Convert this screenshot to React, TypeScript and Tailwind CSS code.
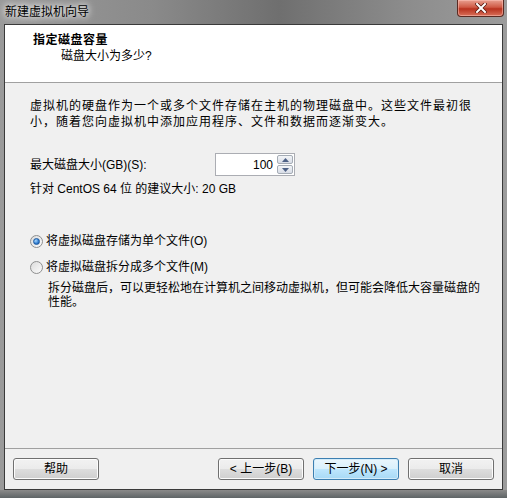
import React from "react";

const FONT = { fontFamily: '"Liberation Sans", "Noto Sans CJK SC", sans-serif' };

function Radio({ checked }: { checked?: boolean }) {
  return (
    <span className="flex h-[13px] w-[13px] shrink-0 items-center justify-center rounded-full border border-[#8e8f8f] bg-[linear-gradient(135deg,#dcdcdc,#fbfbfb)]">
      {checked && (
        <span className="h-[7px] w-[7px] rounded-full border border-[#1d5aa0] bg-[radial-gradient(circle_at_35%_35%,#a8d8ff,#2f7cd0_60%,#1b4f9a)]" />
      )}
    </span>
  );
}

function WinButton({ label, focused }: { label: string; focused?: boolean }) {
  return (
    <button
      className={
        focused
          ? "flex h-[22px] w-[86px] items-center justify-center rounded-[3px] border border-[#3c7fb1] bg-[linear-gradient(#eaf6fd,#d9f0fc_50%,#bee6fd_51%,#a7d9f5)] text-[12px] text-black shadow-[inset_0_0_0_1px_#d3ecfa]"
          : "flex h-[22px] w-[86px] items-center justify-center rounded-[3px] border border-[#707070] bg-[linear-gradient(#f2f2f2,#ebebeb_50%,#dddddd_51%,#cfcfcf)] text-[12px] text-black shadow-[inset_0_0_0_1px_#fcfcfc]"
      }
    >
      {label}
    </button>
  );
}

export default function App() {
  return (
    <div
      style={FONT}
      className="flex h-[498px] w-[507px] flex-col overflow-hidden bg-[linear-gradient(90deg,#9a9a9a,#8a8a8a_30%,#6f6f6f_55%,#8c8c8c_80%,#9c9c9c)] px-[4px] text-[12px] text-black"
    >
      {/* title bar */}
      <div className="flex h-[24px] shrink-0 items-start justify-between">
        <span className="mt-[5px] pl-[1px] leading-[15px] text-black [text-shadow:0_0_6px_#ffffff,0_0_10px_#ffffff]">
          新建虚拟机向导
        </span>
        <div className="-mr-[1px] flex h-[17px] w-[47px] items-center justify-center rounded-b-[4px] border border-t-0 border-[#5a2a22] bg-[linear-gradient(#e8a090,#cf5a45_45%,#b8321e_55%,#d8705a)] shadow-[inset_0_0_0_1px_rgba(255,200,190,0.5)]">
          <svg width="12" height="10" viewBox="0 0 12 10">
            <path d="M2 1 L10 9 M10 1 L2 9" stroke="#5a1a10" strokeWidth="3.6" strokeLinecap="square" />
            <path d="M2 1 L10 9 M10 1 L2 9" stroke="#ffffff" strokeWidth="2" strokeLinecap="square" />
          </svg>
        </div>
      </div>

      {/* client area */}
      <div className="flex h-[466px] shrink-0 flex-col border border-[#3a3a3a] bg-[#f0f0f0]">
        <div className="flex h-[58px] shrink-0 flex-col border-b border-[#a0a0a0] bg-white pl-[28px] pt-[8px]">
          <div className="text-[12px] font-bold leading-[15px] tracking-[0.5px]">指定磁盘容量</div>
          <div className="mt-[1px] pl-[28px] leading-[15px]">磁盘大小为多少?</div>
        </div>

        <div className="flex flex-1 flex-col">
          <div className="flex flex-1 flex-col">
            <p className="pl-[25px] pt-[15px] leading-[16px] tracking-[1px]">
              虚拟机的硬盘作为一个或多个文件存储在主机的物理磁盘中。这些文件最初很
              <br />
              小，随着您向虚拟机中添加应用程序、文件和数据而逐渐变大。
            </p>

            <div className="mt-[23px] flex items-center pl-[25px]">
              <span className="w-[185px] leading-[16px]">最大磁盘大小(GB)(S):</span>
              <div className="flex h-[23px] items-stretch border border-[#abadb3] bg-white">
                <span className="flex w-[61px] items-center justify-end pr-[4px]">100</span>
                <div className="flex w-[17px] flex-col gap-[1px] py-[1px] pr-[1px]">
                  <span className="flex flex-1 items-center justify-center rounded-[2px] border border-[#a5acb5] bg-[linear-gradient(#f3f5f8,#d8dde6)]">
                    <svg width="7" height="4" viewBox="0 0 7 4">
                      <path d="M0 4 L3.5 0 L7 4 Z" fill="#4d6185" />
                    </svg>
                  </span>
                  <span className="flex flex-1 items-center justify-center rounded-[2px] border border-[#a5acb5] bg-[linear-gradient(#f3f5f8,#d8dde6)]">
                    <svg width="7" height="4" viewBox="0 0 7 4">
                      <path d="M0 0 L3.5 4 L7 0 Z" fill="#4d6185" />
                    </svg>
                  </span>
                </div>
              </div>
            </div>

            <div className="mt-[5px] pl-[25px] leading-[16px]">针对 CentOS 64 位 的建议大小: 20 GB</div>

            <label className="mt-[36px] flex items-center gap-[3px] pl-[25px] leading-[16px]">
              <Radio checked />
              <span>将虚拟磁盘存储为单个文件(O)</span>
            </label>
            <label className="mt-[10px] flex items-center gap-[3px] pl-[25px] leading-[16px]">
              <Radio />
              <span>将虚拟磁盘拆分成多个文件(M)</span>
            </label>
            <p className="mt-[6px] pl-[43px] leading-[14px]">
              拆分磁盘后，可以更轻松地在计算机之间移动虚拟机，但可能会降低大容量磁盘的
              <br />
              性能。
            </p>
          </div>

          <div className="flex h-[41px] shrink-0 items-center justify-between border-t border-[#a0a0a0] px-[8px]">
            <WinButton label="帮助" />
            <div className="flex gap-[9px]">
              <WinButton label="< 上一步(B)" />
              <WinButton label="下一步(N) >" focused />
              <WinButton label="取消" />
            </div>
          </div>
        </div>
      </div>

      {/* bottom frame */}
      <div className="-mx-[4px] flex-1 bg-[linear-gradient(#8a8a8a,#5e6466)]" />
    </div>
  );
}
